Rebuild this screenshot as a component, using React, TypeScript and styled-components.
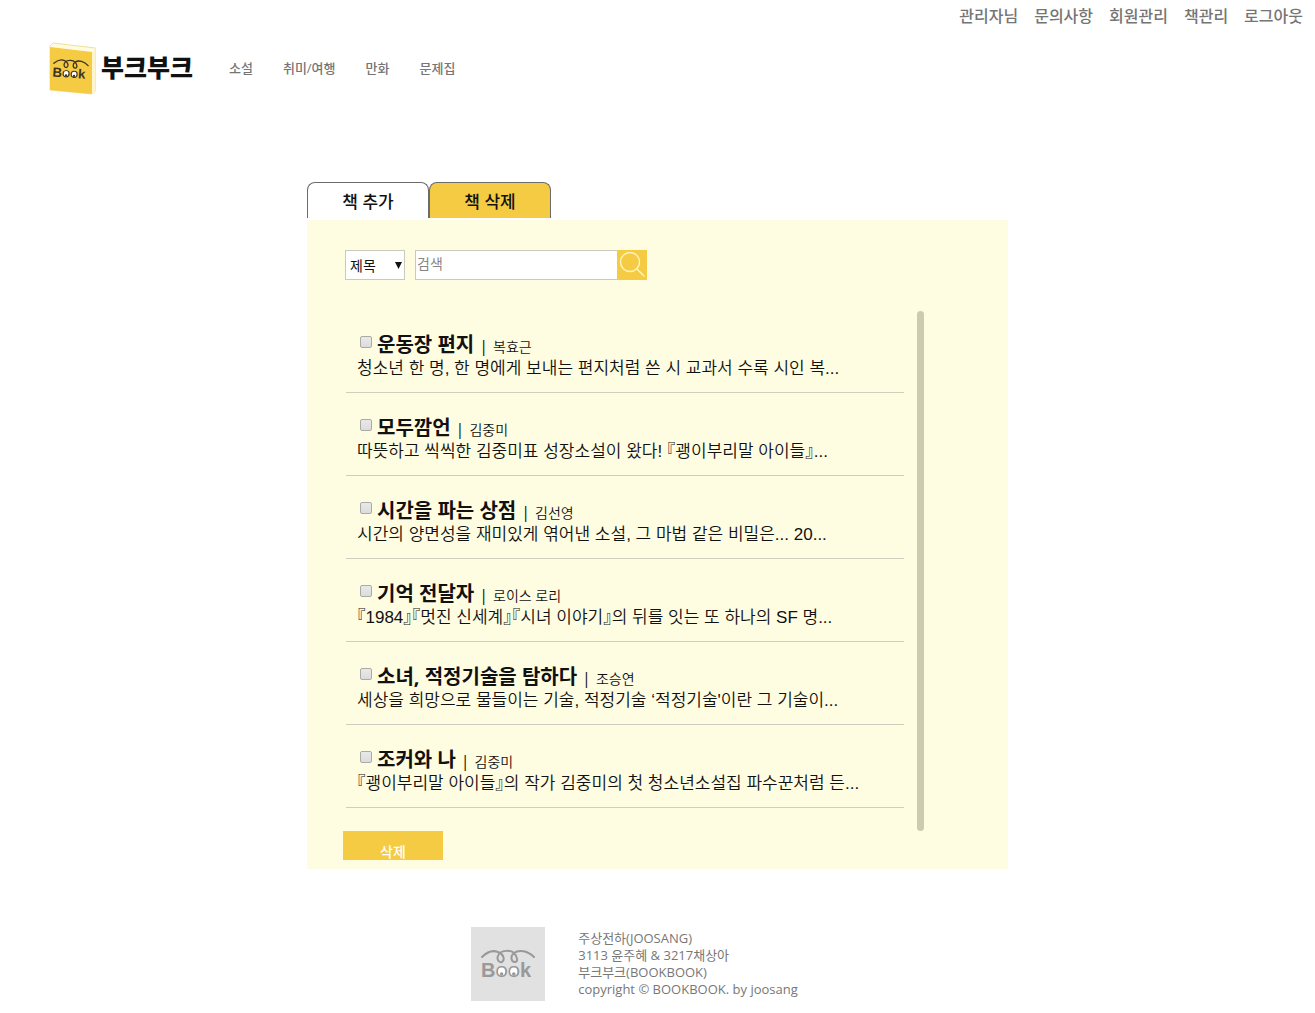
import React, { useState } from 'react';
import styled, { createGlobalStyle } from 'styled-components';

const GlobalStyle = createGlobalStyle`
  *, *::before, *::after { box-sizing: border-box; }
  body {
    margin: 0;
    background: #fff;
    color: #111;
    font-family: "Open Sans", "Noto Sans CJK KR", sans-serif;
    font-feature-settings: "halt";
  }
  button, input, select { font-family: inherit; }
`;

const Utility = styled.nav`
  display: flex;
  justify-content: flex-end;
  gap: 16px;
  padding: 4px 12px 0;
`;

const NavLink = styled.a<{ $size: number }>`
  color: #757575;
  font-size: ${(p) => p.$size}px;
  line-height: 24px;
  font-weight: 500;
  text-decoration: none;
  white-space: nowrap;
`;

const Header = styled.header`
  display: flex;
  align-items: center;
  padding: 13px 48px 0;
`;

const Brand = styled.a`
  display: flex;
  align-items: center;
  gap: 3px;
  color: #111;
  text-decoration: none;
`;

const BrandName = styled.span`
  padding-bottom: 2px;
  font-size: 25px;
  line-height: 32px;
  font-weight: 900;
`;

const Categories = styled.nav`
  display: flex;
  gap: 30px;
  margin-left: 36px;
`;

const Main = styled.main`
  width: 100%;
  max-width: 701px;
  margin: 87px auto 0;
`;

const Tabs = styled.div`
  display: flex;
  margin-bottom: 2px;
`;

const Tab = styled.button<{ $active?: boolean }>`
  width: 122px;
  height: 36px;
  padding: 0;
  border: 1px solid #6b6b6b;
  border-bottom: 0;
  border-radius: 8px 8px 0 0;
  background: ${(p) => (p.$active ? '#f4cb42' : '#fff')};
  color: #111;
  font-size: 17px;
  font-weight: 500;
`;

const Panel = styled.section`
  padding: 30px 38px 9px;
  background: #fffde1;
`;

const SearchForm = styled.form`
  display: flex;
  align-items: stretch;
  height: 30px;
`;

const SelectWrap = styled.div`
  display: grid;
  align-items: center;
  width: 60px;
  margin-right: 10px;
  border: 1px solid #c9c9bd;
  background: #fff;

  > * { grid-area: 1 / 1; }
  > svg { justify-self: end; margin-right: 2px; pointer-events: none; }
`;

const Select = styled.select`
  appearance: none;
  width: 100%;
  height: 100%;
  padding: 0 4px;
  border: 0;
  background: transparent;
  color: #111;
  font-size: 14px;
`;

const SearchInput = styled.input`
  width: 202px;
  padding: 0 1px 3px;
  border: 1px solid #c9c9bd;
  border-right: 0;
  background: #fff;
  font-size: 14px;
  &::placeholder { color: #858585; opacity: 1; }
`;

const SearchButton = styled.button`
  display: grid;
  place-items: center;
  width: 30px;
  padding: 0;
  border: 0;
  background: #f4cb42;
`;

const ListArea = styled.div`
  display: flex;
  width: 100%;
  max-width: 579px;
  margin-top: 30px;
`;

const BookList = styled.ul`
  flex: 1;
  min-width: 0;
  margin: 0 13px 23px 0;
  padding: 0 0 0 1px;
  list-style: none;
`;

const Scroller = styled.div`
  width: 7px;
  margin-top: 1px;
  border-radius: 4px;
  background: #cccab1;
`;

const Row = styled.li`
  height: 83px;
  padding: 23px 11px 0;
  border-bottom: 1px solid #cfcfbf;
`;

const RowHead = styled.div`
  display: flex;
  align-items: baseline;
  height: 24px;
  line-height: 24px;
`;

const Check = styled.input`
  appearance: none;
  align-self: flex-start;
  width: 12px;
  height: 12px;
  margin: 3px 5px 0 3px;
  border: 1px solid #ababa6;
  border-radius: 2px;
  background: linear-gradient(#e9e9e9, #dcdcdc);
  &:checked { background: #777; }
`;

const Title = styled.label`
  font-size: 20px;
  font-weight: 700;
`;

const Divider = styled.span`
  margin: 0 5px;
  font-size: 16px;
`;

const Author = styled.span`
  font-size: 14px;
  font-weight: 350;
`;

const Summary = styled.p`
  margin: 0;
  font-family: "Liberation Sans", "Noto Sans CJK KR", sans-serif;
  font-size: 17px;
  line-height: 24px;
  font-weight: 350;
  white-space: nowrap;
`;

const DeleteButton = styled.button`
  display: block;
  width: 100px;
  height: 29px;
  margin-left: -2px;
  padding: 12px 0 0;
  overflow: hidden;
  border: 0;
  background: #f4cb42;
  color: #fff;
  font-size: 14px;
  line-height: 17px;
  font-weight: 500;
`;

const Footer = styled.footer`
  display: flex;
  justify-content: center;
  gap: 33px;
  padding: 58px 46px 12px 0;
`;

const Address = styled.address`
  padding-top: 3px;
  color: #777;
  font-size: 13px;
  line-height: 17px;
  font-style: normal;
`;

function BookFace({ ink, paper }: { ink: string; paper: string }) {
  return (
    <g>
      <path
        d="M11 30C16 25 22 23 27 25C33 27 34 33 31 35C27 36 25 31 28 27C31 23 40 23 43 26C47 30 47 35 44 35C40 35 39 29 43 26C48 22 57 24 63 30"
        fill="none"
        stroke={ink}
        strokeWidth="2"
        strokeLinecap="round"
      />
      <text x="10" y="50" fontSize="20" fontWeight="700" fontFamily="Liberation Sans, sans-serif" fill={ink}>
        Book
      </text>
      <ellipse cx="30.600" cy="44.500" rx="3.600" ry="4" fill={paper} />
      <ellipse cx="42.800" cy="44.500" rx="3.600" ry="4" fill={paper} />
      <circle cx="30.600" cy="47" r="1.800" fill={ink} />
      <circle cx="42.800" cy="47" r="1.800" fill={ink} />
    </g>
  );
}

const books = [
  ['운동장 편지', '복효근', '청소년 한 명, 한 명에게 보내는 편지처럼 쓴 시 교과서 수록 시인 복...'],
  ['모두깜언', '김중미', '따뜻하고 씩씩한 김중미표 성장소설이 왔다! 『괭이부리말 아이들』...'],
  ['시간을 파는 상점', '김선영', '시간의 양면성을 재미있게 엮어낸 소설, 그 마법 같은 비밀은... 20...'],
  ['기억 전달자', '로이스 로리', '『1984』『멋진 신세계』『시녀 이야기』의 뒤를 잇는 또 하나의 SF 명...'],
  ['소녀, 적정기술을 탐하다', '조승연', "세상을 희망으로 물들이는 기술, 적정기술 ‘적정기술'이란 그 기술이..."],
  ['조커와 나', '김중미', '『괭이부리말 아이들』의 작가 김중미의 첫 청소년소설집 파수꾼처럼 든...'],
];

export default function App() {
  const [query, setQuery] = useState('');
  return (
    <>
      <GlobalStyle />
      <Utility>
        {['관리자님', '문의사항', '회원관리', '책관리', '로그아웃'].map((t) => (
          <NavLink key={t} href="#" $size={16}>{t}</NavLink>
        ))}
      </Utility>
      <Header>
        <Brand href="#">
          <svg width="50" height="54" viewBox="0 0 50 54" aria-hidden="true">
            <path d="M2 5L5 2L47.500 7V50L44 53L2 49Z" fill="#fffbe0" stroke="#f1e09a" strokeWidth="1" />
            <path d="M2 6L44 11V53L2 49Z" fill="#f4cb42" />
            <path d="M44 11L47.500 7V50L44 53Z" fill="#fff6cf" />
            <g transform="translate(0 2) rotate(4) scale(.66)">
              <BookFace ink="#3b3320" paper="#fff" />
            </g>
          </svg>
          <BrandName>부크부크</BrandName>
        </Brand>
        <Categories>
          {['소설', '취미/여행', '만화', '문제집'].map((t) => (
            <NavLink key={t} href="#" $size={13}>{t}</NavLink>
          ))}
        </Categories>
      </Header>
      <Main>
        <Tabs>
          <Tab type="button">책 추가</Tab>
          <Tab type="button" $active>책 삭제</Tab>
        </Tabs>
        <Panel>
          <SearchForm onSubmit={(e) => e.preventDefault()}>
            <SelectWrap>
              <Select aria-label="검색 기준">
                <option>제목</option>
              </Select>
              <svg width="7" height="7" viewBox="0 0 7 7" aria-hidden="true">
                <path d="M0 0H7L3.500 7Z" fill="#111" />
              </svg>
            </SelectWrap>
            <SearchInput
              aria-label="검색"
              placeholder="검색"
              value={query}
              onChange={(e) => setQuery(e.target.value)}
            />
            <SearchButton type="submit" aria-label="검색">
              <svg width="30" height="30" viewBox="0 0 30 30" fill="none" stroke="#fff3b8" strokeWidth="1.500" aria-hidden="true">
                <circle cx="13" cy="12" r="9.500" />
                <path d="M20 19L27 26" strokeLinecap="round" />
              </svg>
            </SearchButton>
          </SearchForm>
          <ListArea>
            <BookList>
              {books.map(([title, author, summary], i) => (
                <Row key={title}>
                  <RowHead>
                    <Check type="checkbox" id={`book-${i}`} />
                    <Title htmlFor={`book-${i}`}>{title}</Title>
                    <Divider>|</Divider>
                    <Author>{author}</Author>
                  </RowHead>
                  <Summary>{summary}</Summary>
                </Row>
              ))}
            </BookList>
            <Scroller />
          </ListArea>
          <DeleteButton type="button">삭제</DeleteButton>
        </Panel>
      </Main>
      <Footer>
        <svg width="74" height="74" viewBox="0 0 74 74" aria-hidden="true">
          <rect width="74" height="74" fill="#e1e1e1" />
          <BookFace ink="#999" paper="#fff" />
        </svg>
        <Address>
          주상전하(JOOSANG)<br />
          3113 윤주혜 &amp; 3217채상아<br />
          부크부크(BOOKBOOK)<br />
          copyright © BOOKBOOK. by joosang
        </Address>
      </Footer>
    </>
  );
}
